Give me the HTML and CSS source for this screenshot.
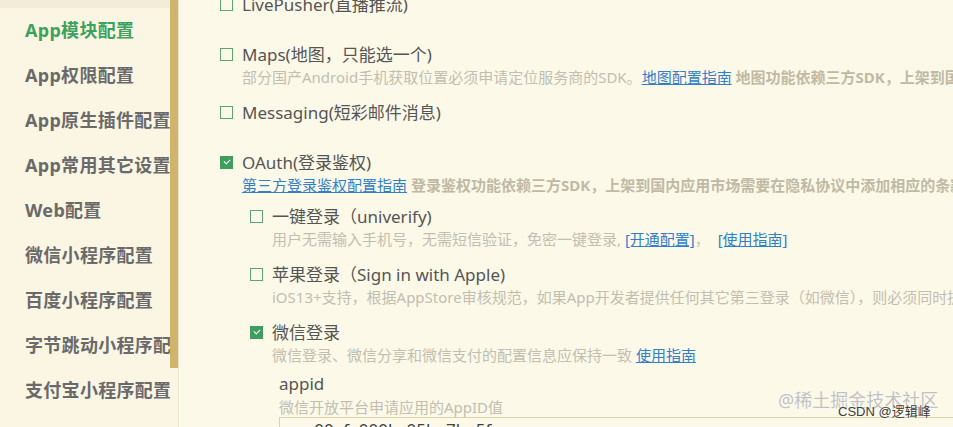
FILE: index.html
```html
<!DOCTYPE html>
<html lang="zh-CN">
<head>
  <meta charset="UTF-8" />
  <meta name="viewport" content="width=device-width, initial-scale=1.0"/>
  <title>manifest.json</title>
  <link rel="stylesheet" href="styles.css">
</head>
<body>
  <div class="page">
    <aside class="sidebar">
      <ul class="menu">
        <li class="menu-item hover">基础配置</li>
        <li class="menu-item active">App模块配置</li>
        <li class="menu-item">App权限配置</li>
        <li class="menu-item">App原生插件配置</li>
        <li class="menu-item">App常用其它设置</li>
        <li class="menu-item">Web配置</li>
        <li class="menu-item">微信小程序配置</li>
        <li class="menu-item">百度小程序配置</li>
        <li class="menu-item">字节跳动小程序配置</li>
        <li class="menu-item">支付宝小程序配置</li>
      </ul>
      <div class="scrollbar"><div class="thumb"></div></div>
    </aside>

    <main class="content">
      <div class="module-list">
        <div class="module">
          <label class="row"><span class="checkbox"></span>LivePusher(直播推流)</label>
        </div>

        <div class="module">
          <label class="row"><span class="checkbox"></span>Maps(地图，只能选一个)</label>
          <p class="desc">部分国产Android手机获取位置必须申请定位服务商的SDK。<a href="#">地图配置指南</a> <b>地图功能依赖三方SDK，上架到国内应用市场需要在隐私协议中添加相应的条款</b></p>
        </div>

        <div class="module">
          <label class="row"><span class="checkbox"></span>Messaging(短彩邮件消息)</label>
        </div>

        <div class="module">
          <label class="row"><span class="checkbox checked"></span>OAuth(登录鉴权)</label>
          <p class="desc"><a href="#">第三方登录鉴权配置指南</a> <b>登录鉴权功能依赖三方SDK，上架到国内应用市场需要在隐私协议中添加相应的条款</b></p>

          <div class="sub-list">
            <div class="sub-module">
              <label class="row"><span class="checkbox"></span>一键登录（univerify)</label>
              <p class="desc">用户无需输入手机号，无需短信验证，免密一键登录, <a href="#">[开通配置]</a>，&nbsp; <a href="#">[使用指南]</a></p>
            </div>
            <div class="sub-module">
              <label class="row"><span class="checkbox"></span>苹果登录（Sign in with Apple)</label>
              <p class="desc">iOS13+支持，根据AppStore审核规范，如果App开发者提供任何其它第三登录（如微信），则必须同时提供苹果登录</p>
            </div>
            <div class="sub-module">
              <label class="row"><span class="checkbox checked"></span>微信登录</label>
              <p class="desc">微信登录、微信分享和微信支付的配置信息应保持一致 <a href="#">使用指南</a></p>

              <div class="field">
                <div class="field-name">appid</div>
                <div class="field-desc">微信开放平台申请应用的AppID值</div>
                <input class="field-input" type="text" value="wx00afe000bc05ba7be5f">
              </div>
            </div>
          </div>
        </div>
      </div>
    </main>

    <div class="watermark">@稀土掘金技术社区</div>
    <div class="credit">CSDN @逻辑峰</div>
  </div>
</body>
</html>
```

FILE: styles.css
```css
html, body {
  margin: 0;
  padding: 0;
  height: 100%;
  overflow: hidden;
}

body {
  font-family: "Noto Sans", "Noto Sans CJK SC", sans-serif;
  background-color: #fdf9e9;
  color: #555;
}

.page {
  position: relative;
  display: flex;
  height: 427px;
  overflow: hidden;
}

/* left menu */
.sidebar {
  display: flex;
  width: 178px;
  flex-shrink: 0;
  background-color: #fbf6e4;
  border-right: 1px solid #efe7cd;
}

.menu {
  list-style: none;
  margin: -37px 0 0 0;
  padding: 0;
  width: 170px;
  overflow: hidden;
}

.menu-item {
  height: 45px;
  line-height: 45px;
  padding-left: 25px;
  font-size: 18px;
  font-weight: bold;
  letter-spacing: 0.3px;
  color: #6a6a6a;
  white-space: nowrap;
}

.menu-item.hover {
  background-color: #f3ecd8;
}

.menu-item.active {
  color: #3da25d;
}

.scrollbar {
  width: 8px;
}

.scrollbar .thumb {
  height: 368px;
  background-color: #d1b46b;
}

/* modules */
.content {
  flex: 1;
  min-width: 0;
  padding-left: 41px;
  overflow: hidden;
}

.module-list {
  margin-top: -6px;
}

.module {
  box-sizing: border-box;
  min-height: 50px;
  padding-bottom: 14px;
}

.row {
  display: flex;
  align-items: center;
  gap: 9px;
  height: 22px;
  line-height: 22px;
  font-size: 17px;
  color: #555;
  white-space: nowrap;
}

.checkbox {
  box-sizing: border-box;
  width: 13px;
  height: 13px;
  flex-shrink: 0;
  border: 1px solid #5aa771;
  margin-top: -2px;
}

.checkbox.checked {
  background-color: #3f9d5e;
  border-color: #3f9d5e;
  position: relative;
}

.checkbox.checked::after {
  content: "";
  position: absolute;
  left: 3px;
  top: 2px;
  width: 5px;
  height: 3px;
  border-left: 1.5px solid #fff;
  border-bottom: 1.5px solid #fff;
  transform: rotate(-45deg);
}

.desc {
  margin: 0;
  padding-left: 22px;
  height: 22px;
  line-height: 22px;
  font-size: 15px;
  color: #c2beb0;
  white-space: nowrap;
}

.desc a {
  color: #2f80cf;
  text-decoration: underline;
}

.desc b {
  color: #c0baa4;
}

.sub-list {
  margin-top: 10px;
  margin-left: 30px;
}

.sub-module {
  padding-bottom: 14px;
}

.field {
  margin-top: 7px;
  padding-left: 29px;
}

.field-name {
  height: 22px;
  line-height: 22px;
  font-size: 17px;
  color: #555;
}

.field-desc {
  margin-top: 2px;
  height: 20px;
  line-height: 20px;
  font-size: 15px;
  color: #c2beb0;
  white-space: nowrap;
}

.field-input {
  display: block;
  box-sizing: border-box;
  width: 800px;
  height: 24px;
  margin: 0;
  padding: 0 12px;
  border: 1px solid #ddd2ac;
  background-color: #fdf9e9;
  font-family: inherit;
  font-size: 17px;
  line-height: 22px;
  color: #444;
  outline: none;
}

/* image watermark */
.watermark {
  position: absolute;
  left: 778px;
  top: 386px;
  font-size: 18px;
  color: #c2c2c2;
  text-shadow: 0 0 1px #fff;
  white-space: nowrap;
}

.credit {
  position: absolute;
  left: 838px;
  top: 401px;
  font-family: "Liberation Sans", "Noto Sans CJK SC", sans-serif;
  font-size: 13px;
  color: #3c3c3c;
  text-shadow: 0 0 2px #fff;
  white-space: nowrap;
}
```
